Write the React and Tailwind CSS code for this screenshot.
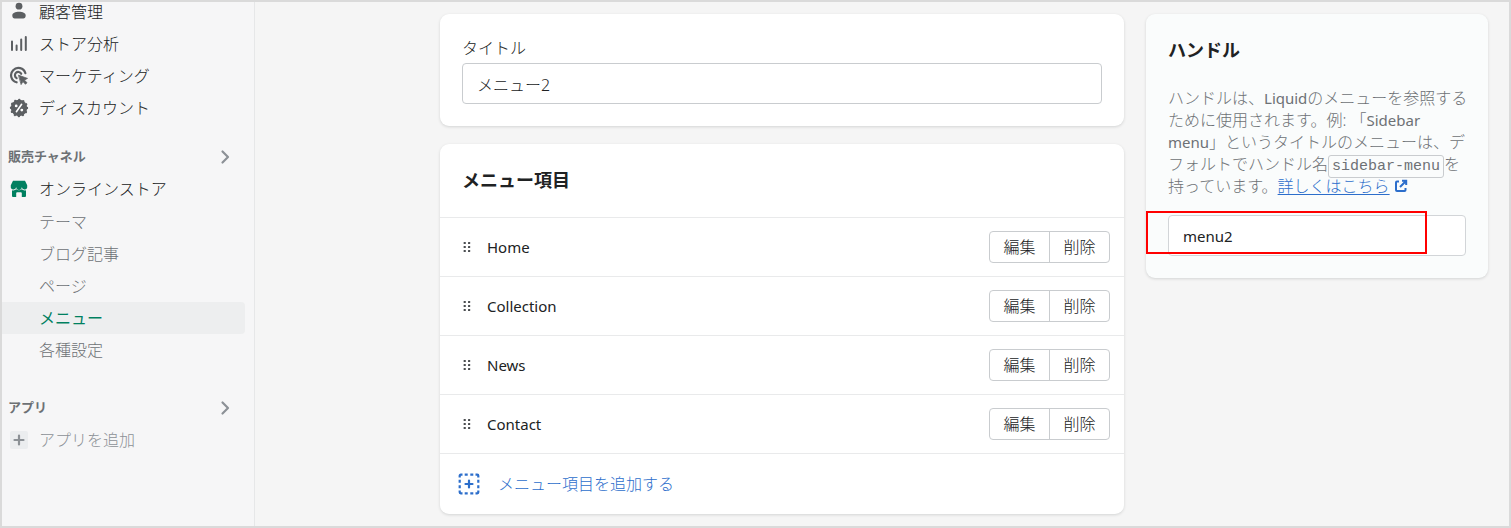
const iconProps = { width: 20, height: 20, viewBox: "0 0 20 20", "aria-hidden": true };

const CustomersIcon = () => (
  <svg {...iconProps} fill="#5c5f62">
    <circle cx="10" cy="4.200" r="3.400" />
    <path d="M3.300 13.400c0-2.400 3-3.700 6.700-3.700s6.700 1.300 6.700 3.700c0 1.800-1 3-2.400 3H5.700c-1.400 0-2.400-1.200-2.400-3Z" />
  </svg>
);

const AnalyticsIcon = () => (
  <svg {...iconProps} stroke="#5c5f62" strokeWidth="2" strokeLinecap="round">
    <path d="M3 7.500V16M7.600 11.500V16M12.200 5.500V16M16.800 3V16" />
  </svg>
);

const MarketingIcon = () => (
  <svg {...iconProps} fill="none" stroke="#5c5f62" strokeWidth="2.200" strokeLinecap="round">
    <path d="M16.400 7.200A7.300 7.300 0 1 0 7.600 16.300" />
    <path d="M12.200 7.800A3.300 3.300 0 1 0 7.600 12.100" />
    <path d="M9.800 9.300 18.500 12.400 15.400 14.100 18 16.700 16.500 18.200 13.900 15.600 12.300 18.300Z" fill="#5c5f62" strokeWidth="0.800" strokeLinejoin="round" />
  </svg>
);

const DiscountIcon = () => (
  <svg {...iconProps}>
    <circle cx="10" cy="10" r="8.200" fill="#5c5f62" />
    <circle cx="10" cy="10" r="8" fill="none" stroke="#5c5f62" strokeWidth="2.400" strokeLinecap="round" strokeDasharray="0.1 4.089" />
    <path d="M12.600 6.300 7.400 13.700" stroke="#fff" strokeWidth="1.600" strokeLinecap="round" />
    <circle cx="7.200" cy="7.900" r="1.400" fill="#fff" />
    <circle cx="12.800" cy="12.100" r="1.400" fill="#fff" />
  </svg>
);

const StoreIcon = () => (
  <svg {...iconProps} fill="#008060">
    <path d="M4 1.800h12l2.200 4.400v1.300a2.700 2.700 0 0 1-5.400.6 2.800 2.800 0 0 1-5.600 0 2.700 2.700 0 0 1-5.400-.6V6.200Z" />
    <path d="M3 11.200c1.600.5 3.200.1 4.300-.9 1.600 1.300 3.800 1.300 5.400 0 1.100 1 2.700 1.400 4.300.9V17a1 1 0 0 1-1 1h-3.200v-3.700a1 1 0 0 0-1-1H8.200a1 1 0 0 0-1 1V18H4a1 1 0 0 1-1-1Z" />
  </svg>
);

const AddAppIcon = () => (
  <svg {...iconProps}>
    <rect x="1" y="1" width="18" height="18" rx="2" fill="#ebedef" />
    <path d="M10 5.500v9M5.500 10h9" stroke="#8c9196" strokeWidth="2.200" strokeLinecap="round" />
  </svg>
);

const ChevronIcon = () => (
  <svg width="20" height="20" viewBox="0 0 20 20" fill="none" stroke="#8c9196" strokeWidth="2.200" strokeLinecap="round" strokeLinejoin="round" aria-hidden="true">
    <path d="m7.500 4.500 5.500 5.500-5.500 5.500" />
  </svg>
);

const DragIcon = () => (
  <svg {...iconProps} fill="#4a4d50">
    {[5, 9, 13].map((y) => (
      <g key={y}>
        <rect x="6.600" y={y} width="2.200" height="2" rx="0.500" />
        <rect x="11" y={y} width="2.200" height="2" rx="0.500" />
      </g>
    ))}
  </svg>
);

const AddItemIcon = () => (
  <svg width="24" height="24" viewBox="0 0 24 24" fill="none" stroke="#2c6ecb" strokeWidth="2.200" aria-hidden="true">
    <path d="M2.700 5.500V3.700a1 1 0 0 1 1-1H5.500M18.500 2.700h1.800a1 1 0 0 1 1 1V5.500M21.300 18.500v1.800a1 1 0 0 1-1 1H18.500M5.500 21.300H3.700a1 1 0 0 1-1-1V18.500" />
    <path d="M7.700 2.700h3M13.300 2.700h3M7.700 21.300h3M13.300 21.300h3M2.700 7.700v3M2.700 13.300v3M21.300 7.700v3M21.300 13.300v3" />
    <path d="M12 8.500v7M8.500 12h7" strokeLinecap="round" />
  </svg>
);

const ExternalIcon = () => (
  <svg className="ml-1 inline-block align-[-1px]" width="14" height="14" viewBox="0 0 14 14" fill="none" stroke="#2c6ecb" strokeWidth="2" aria-hidden="true">
    <path d="M5 2.500H3a1 1 0 0 0-1 1v7.500a1 1 0 0 0 1 1h7.500a1 1 0 0 0 1-1V9" />
    <path d="M8 1.800h4.200V6M12 2 6 8" />
  </svg>
);

const mainLinks = [
  { label: "顧客管理", icon: <CustomersIcon /> },
  { label: "ストア分析", icon: <AnalyticsIcon /> },
  { label: "マーケティング", icon: <MarketingIcon /> },
  { label: "ディスカウント", icon: <DiscountIcon /> },
];

const storeLinks = ["テーマ", "ブログ記事", "ページ", "メニュー", "各種設定"];

const menuItems = ["Home", "Collection", "News", "Contact"];

const NavLink = ({ icon, children }) => (
  <a href="#" className="flex h-8 items-center gap-[10px] pl-[7px]">
    {icon}
    {children}
  </a>
);

const NavHeading = ({ children }) => (
  <button type="button" className="flex h-8 w-full items-center justify-between pr-[19px] pl-[6px] text-[13px] font-semibold text-[#6d7175]">
    {children}
    <ChevronIcon />
  </button>
);

const Sidebar = () => (
  <aside className="w-[253px] shrink-0 overflow-hidden border-r border-[#e6e7e8]">
    <nav className="-mt-[6px]">
      {mainLinks.map((link) => (
        <NavLink key={link.label} icon={link.icon}>{link.label}</NavLink>
      ))}

      <div className="mt-[17px]">
        <NavHeading>販売チャネル</NavHeading>
        <NavLink icon={<StoreIcon />}>オンラインストア</NavLink>
        <ul className="mt-px mr-[9px] text-[#6d7175]">
          {storeLinks.map((label) => (
            <li key={label}>
              <a
                href="#"
                className={
                  label === "メニュー"
                    ? "flex h-8 items-center rounded-r bg-[#edeeef] pl-[37px] font-normal text-[#008060]"
                    : "flex h-8 items-center pl-[37px]"
                }
              >
                {label}
              </a>
            </li>
          ))}
        </ul>
      </div>

      <div className="mt-[26px] text-[#8c9196]">
        <NavHeading>アプリ</NavHeading>
        <NavLink icon={<AddAppIcon />}>アプリを追加</NavLink>
      </div>
    </nav>
  </aside>
);

const TitleCard = () => (
  <section className="rounded-[9px] bg-white p-[22px] shadow-[0_1px_3px_rgba(23,24,24,0.15)]">
    <label htmlFor="title" className="mb-[3px] block leading-6">タイトル</label>
    <input
      id="title"
      defaultValue="メニュー2"
      className="h-[41px] w-full rounded border border-[#c9cccf] bg-white px-[14px]"
    />
  </section>
);

const MenuItemsCard = () => (
  <section className="rounded-[9px] bg-white shadow-[0_1px_3px_rgba(23,24,24,0.15)]">
    <h2 className="px-[22px] pt-[22px] pb-[23px] text-lg leading-7 font-semibold">メニュー項目</h2>
    <ul>
      {menuItems.map((item) => (
        <li key={item} className="flex items-center gap-[10px] border-t border-[#e9eaeb] py-[13px] pr-[14px] pl-[17px]">
          <DragIcon />
          <span className="text-[15px] font-normal">{item}</span>
          <div className="ml-auto flex h-8 rounded border border-[#c9cccf]">
            <button type="button" className="w-[60px] border-r border-[#c9cccf]">編集</button>
            <button type="button" className="w-[59px]">削除</button>
          </div>
        </li>
      ))}
    </ul>
    <button type="button" className="flex h-[61px] w-full items-center gap-[17px] border-t border-[#e9eaeb] pl-[17px] text-[#2c6ecb]">
      <AddItemIcon />
      メニュー項目を追加する
    </button>
  </section>
);

const Latin = ({ children }) => <span className="text-[15px] font-normal">{children}</span>;

const HandleCard = () => (
  <section className="min-w-0 rounded-[9px] bg-[#fafcfc] p-[22px] shadow-[0_1px_3px_rgba(23,24,24,0.15)]">
    <h2 className="text-lg leading-7 font-semibold">ハンドル</h2>
    <p className="mt-[23px] leading-[22px] whitespace-nowrap text-[#6d7175]">
      ハンドルは、<Latin>Liquid</Latin>のメニューを参照する<br />
      ために使用されます。例: 「<Latin>Sidebar</Latin><br />
      <Latin>menu</Latin>」というタイトルのメニューは、デ<br />
      フォルトでハンドル名
      <code className="rounded-[3px] border border-[#c9cccf] px-[3px] py-[2px] font-['Liberation_Mono',monospace] text-[15px] leading-4">sidebar-menu</code>
      を<br />
      持っています。
      <a href="#" className="text-[#2c6ecb]">
        <span className="underline underline-offset-2">詳しくはこちら</span>
        <ExternalIcon />
      </a>
    </p>
    <div className="relative mt-[18px]">
      <input
        aria-label="ハンドル"
        defaultValue="menu2"
        className="block h-[41px] w-full rounded border border-[#d2d5d8] bg-white px-[14px] text-[15px] font-normal"
      />
      <div className="pointer-events-none absolute -top-1 right-[39px] -left-[22px] h-[43px] border-2 border-[#f00]" />
    </div>
  </section>
);

export default function App() {
  return (
    <div className="flex min-h-screen border-2 border-[#dadada] bg-[#f6f6f7] font-['Noto_Sans','Noto_Sans_CJK_JP',sans-serif] text-base font-light text-[#202223]">
      <Sidebar />
      <main className="flex-1 bg-[#f5f5f5] py-3 pr-[21px] pl-6">
        <div className="ml-auto grid max-w-[1048px] grid-cols-[2fr_1fr] items-start gap-[22px]">
          <div className="grid min-w-0 gap-[18px]">
            <TitleCard />
            <MenuItemsCard />
          </div>
          <HandleCard />
        </div>
      </main>
    </div>
  );
}
